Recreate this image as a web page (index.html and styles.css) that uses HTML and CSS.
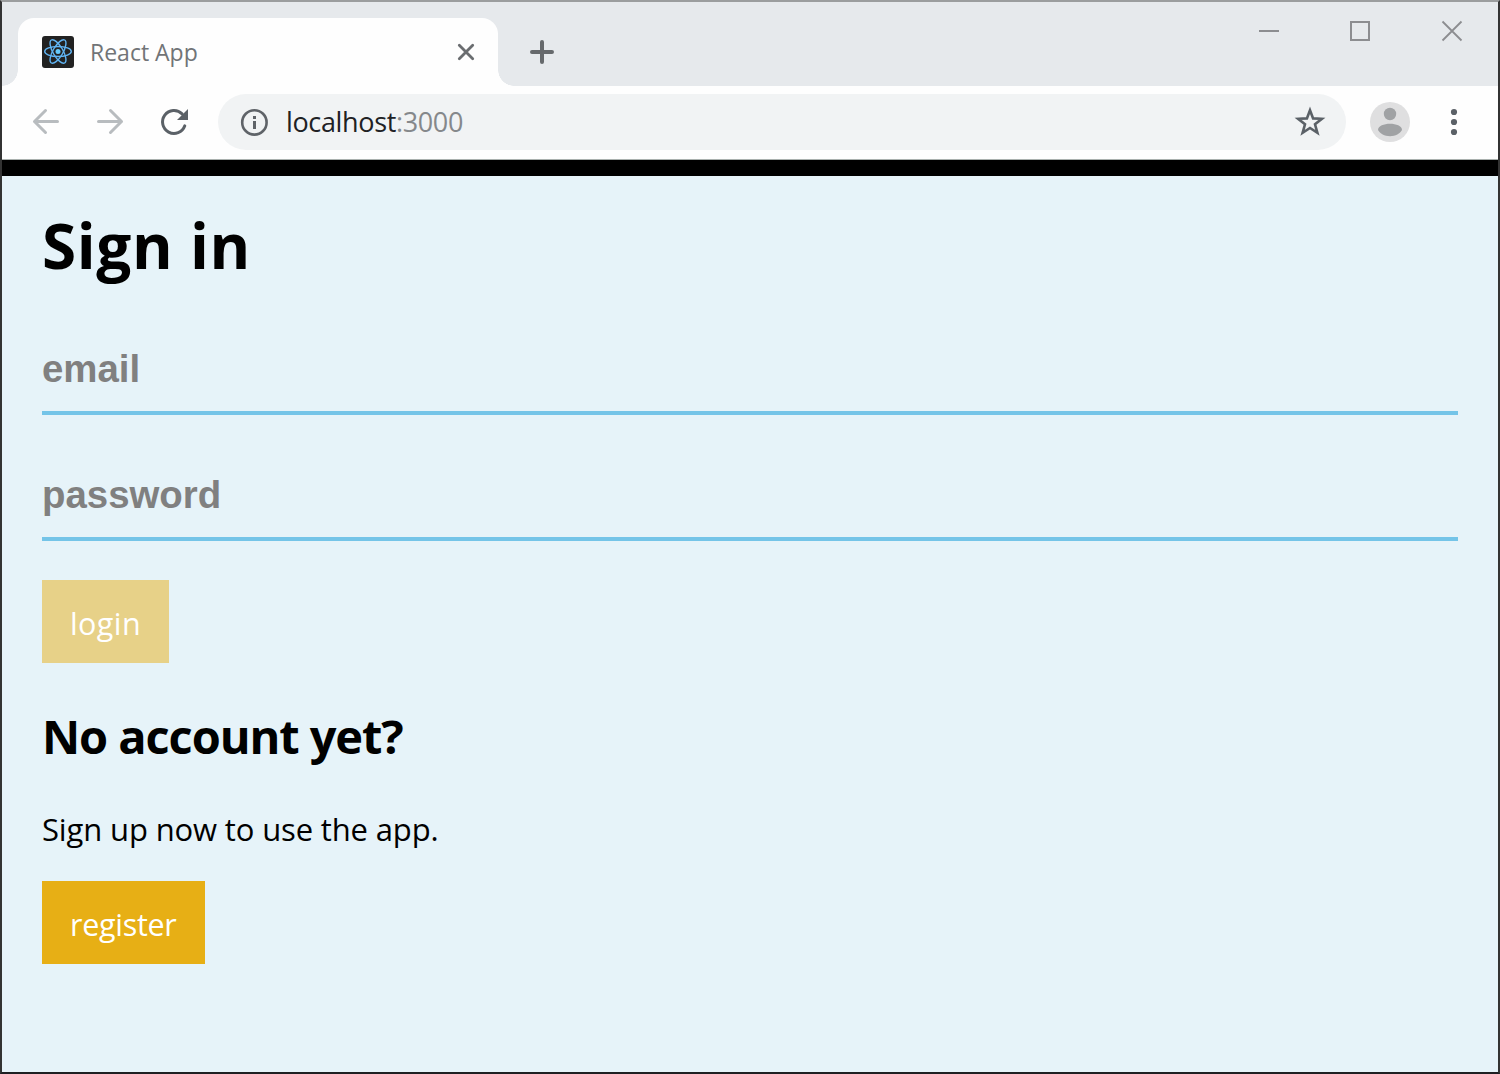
FILE: index.html
```html
<!DOCTYPE html>
<html lang="en">
<head>
<meta charset="utf-8">
<title>React App</title>
<link rel="stylesheet" href="styles.css">
</head>
<body>
<div class="window">
  <header class="titlebar">
    <div class="tab-lead"></div>
    <div class="tab">
      <svg class="favicon" width="32" height="32" viewBox="0 0 32 32">
        <rect width="32" height="32" rx="3" fill="#222"/>
        <g fill="none" stroke="#61b5f4" stroke-width="1.4">
          <ellipse cx="16" cy="15.5" rx="13.3" ry="5"/>
          <ellipse cx="16" cy="15.5" rx="13.3" ry="5" transform="rotate(60 16 15.5)"/>
          <ellipse cx="16" cy="15.5" rx="13.3" ry="5" transform="rotate(120 16 15.5)"/>
        </g>
        <circle cx="16" cy="15.5" r="2.5" fill="#66c9fb"/>
      </svg>
      <span class="tab-title">React App</span>
      <svg class="tab-close" width="20" height="20" viewBox="0 0 20 20"><path d="M3.3 3.3l13.4 13.4M16.7 3.3L3.3 16.7" stroke="#6a6d70" stroke-width="2.8" stroke-linecap="round"/></svg>
    </div>
    <div class="tab-trail"></div>
    <svg class="new-tab" width="24" height="24" viewBox="0 0 24 24"><path d="M12 2v20M2 12h20" stroke="#66696c" stroke-width="4" stroke-linecap="round"/></svg>
    <div class="controls">
      <svg width="22" height="22" viewBox="0 0 22 22"><path d="M2 11h20" stroke="#8c8d90" stroke-width="2"/></svg>
      <svg width="22" height="22" viewBox="0 0 22 22"><rect x="2" y="2" width="18" height="18" fill="none" stroke="#8c8d90" stroke-width="2"/></svg>
      <svg width="22" height="22" viewBox="0 0 22 22"><path d="M1.5 1.5l19 19M20.5 1.5l-19 19" stroke="#8c8d90" stroke-width="1.8"/></svg>
    </div>
  </header>
  <nav class="toolbar">
    <svg class="nav-icon" width="32" height="32" viewBox="0 0 32 32"><path d="M27.5 15.500H4.500M15.500 4.500l-11 11 11 11" fill="none" stroke="#b8bcbf" stroke-width="3" stroke-linecap="round" stroke-linejoin="round"/></svg>
    <svg class="nav-icon" width="32" height="32" viewBox="0 0 32 32"><path d="M4.500 15.500h23M16.500 4.500l11 11-11 11" fill="none" stroke="#b8bcbf" stroke-width="3" stroke-linecap="round" stroke-linejoin="round"/></svg>
    <svg class="nav-icon" width="32" height="32" viewBox="0 0 32 32"><path d="M26.800 19.800A11.450 11.450 0 1 1 24.100 7.900" fill="none" stroke="#5b6167" stroke-width="3" stroke-linecap="round"/><path d="M30 3v11H19z" fill="#5b6167"/></svg>
    <div class="address">
      <svg width="28" height="28" viewBox="0 0 28 28"><circle cx="14.4" cy="14.400" r="12.200" fill="none" stroke="#5f6368" stroke-width="2.600"/><path d="M14.500 8v3M14.500 13v8" stroke="#5f6368" stroke-width="3"/></svg>
      <span class="url">localhost<span class="port">:3000</span></span>
      <svg class="star" width="32" height="32" viewBox="0 0 32 32"><path d="M16 4.200l3.100 8.200 8.800.4-6.900 5.500 2.400 8.500L16 22l-7.400 4.800L11 18.300l-6.900-5.500 8.800-.4z" fill="none" stroke="#5b6167" stroke-width="2.600"/></svg>
    </div>
    <svg class="avatar" width="40" height="40" viewBox="0 0 40 40"><circle cx="20" cy="20" r="20" fill="#dfdfe0"/><circle cx="20" cy="12" r="6.200" fill="#a0a2a4"/><path d="M8 28C8 24 14 21.800 20 21.800S32 24 32 28C30 31.500 25.500 34.200 20 34.200S10 31.500 8 28z" fill="#a0a2a4"/></svg>
    <svg class="menu" width="8" height="28" viewBox="0 0 8 28"><g fill="#5b6167"><circle cx="4" cy="4" r="3.100"/><circle cx="4" cy="14" r="3.100"/><circle cx="4" cy="24" r="3.100"/></g></svg>
  </nav>
  <main class="page">
    <h1 class="title">Sign in</h1>
    <form class="form">
      <input class="field" type="text" placeholder="email">
      <input class="field" type="password" placeholder="password">
      <button class="button button-login" type="button" disabled>login</button>
    </form>
    <h2 class="subtitle">No account yet?</h2>
    <p class="hint">Sign up now to use the app.</p>
    <button class="button button-register" type="button">register</button>
  </main>
</div>
</body>
</html>
```

FILE: styles.css
```css
* { box-sizing: border-box; }
body { margin: 0; font-family: "Open Sans", "Noto Sans", sans-serif; color: #000; }
svg { display: block; flex: none; }

.window {
  height: 1074px;
  border: 2px solid #333;
  border-top-color: #9b9d9e;
  border-bottom-color: #1e1f22;
  display: flex;
  flex-direction: column;
  overflow: hidden;
}

.titlebar { height: 84px; display: flex; background: #e6e9ec; }
.tab-lead, .tab-trail {
  width: 16px;
  height: 16px;
  align-self: flex-end;
}
.tab-lead { background: radial-gradient(circle at 0 0, #e6e9ec 15.5px, #fefefe 16px); }
.tab-trail { background: radial-gradient(circle at 100% 0, #e6e9ec 15.5px, #fefefe 16px); }
.tab {
  width: 480px;
  margin-top: 16px;
  padding: 0 22px 0 24px;
  border-radius: 16px 16px 0 0;
  background: #fefefe;
  display: flex;
  align-items: center;
}
.tab-title { margin-left: 16px; font-size: 23px; line-height: 32px; color: #717477; }
.tab-close { margin-left: auto; }
.new-tab { margin: 38px 0 0 16px; }
.controls { margin: 18px 35px 0 auto; display: flex; gap: 70px; }

.toolbar {
  height: 74px;
  border-bottom: 1px solid #a9b0ad;
  background: #fefefe;
  display: flex;
  align-items: flex-start;
  padding: 8px 0 0 28px;
}
.nav-icon { margin: 12px 32px 0 0; }
.address {
  width: 1128px;
  height: 56px;
  margin-left: -4px;
  padding: 0 20px 0 22px;
  border-radius: 28px;
  background: #f1f3f4;
  display: flex;
  align-items: center;
}
.url { margin-left: 18px; font-size: 27px; line-height: 36px; letter-spacing: -0.35px; color: #202124; }
.port { color: #85888b; }
.star { margin-left: auto; }
.avatar { margin: 8px 0 0 24px; }
.menu { margin: 14px 0 0 40px; }

.page {
  flex: 1;
  padding: 27px 40px 0;
  border-top: 16px solid #000;
  background: #e6f3f9;
}
.title { margin: 0; font-size: 62px; line-height: 84px; font-weight: 700; letter-spacing: 0.6px; }
.form { margin: 40px 0 0; display: flex; flex-direction: column; align-items: flex-start; }
.field {
  width: 100%;
  height: 88px;
  margin: 0 0 38px;
  padding: 20px 0;
  border: 0;
  border-bottom: 4px solid #74c4e8;
  border-radius: 0;
  background: transparent;
  font: 700 38.4px/44px "Liberation Sans", sans-serif;
}
.field::placeholder { color: #808080; opacity: 1; }
.button {
  display: block;
  height: 83px;
  padding: 22px 0 18px 28px;
  border: 0;
  background: #e7af15;
  color: #fff;
  font: 400 30.5px/43px "Open Sans", "Noto Sans", sans-serif;
  text-align: left;
}
.button-login { width: 127px; margin-top: 1px; background: #e7d188; letter-spacing: 0.4px; }
.button-register { width: 163px; letter-spacing: -0.3px; }
.subtitle { margin: 41px 0 0; font-size: 47px; line-height: 64px; font-weight: 700; letter-spacing: -1.1px; }
.hint { margin: 39px 0 30px; font-size: 31px; line-height: 44px; letter-spacing: -0.14px; }
```
